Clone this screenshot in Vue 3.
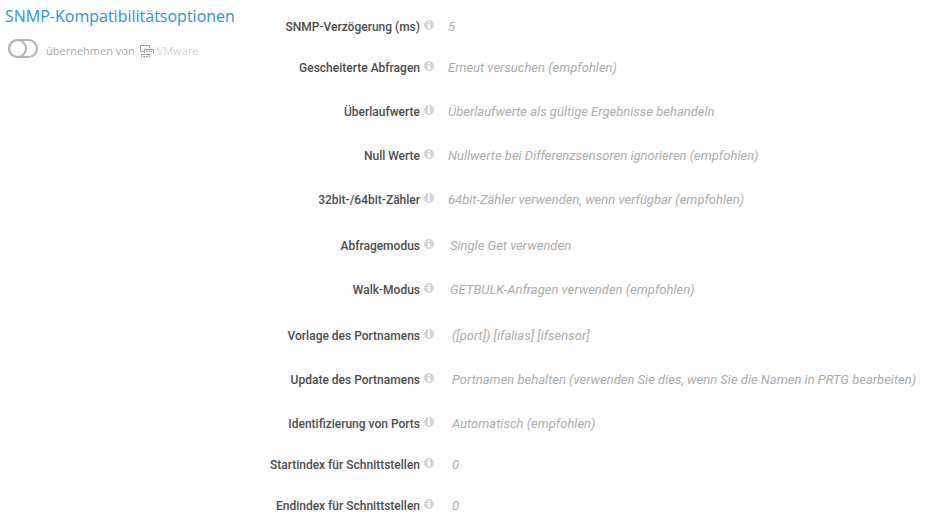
<template>
  <section class="settings">
    <header class="settings-head">
      <h2 class="settings-title">SNMP-Kompatibilitätsoptionen</h2>
      <div class="inherit">
        <input id="inherit" v-model="inherit" type="checkbox" class="switch" />
        <label for="inherit">übernehmen von</label>
        <a href="#" class="parent-link">
          <svg class="parent-icon" width="15" height="14" viewBox="0 0 15 14" aria-hidden="true">
            <path d="M9.5 4V1.5h-9v6H4M4.5 9V5.5h9V9M1.5 13.5v-3h8v3" />
            <path d="M6 7.5h2m1 0h1m1 0h1M3 12.5h2m1 0h2" />
          </svg>
          <span>VMware</span>
        </a>
      </div>
    </header>

    <div class="fields">
      <dl v-for="group in groups" :key="group.name" :class="['group', group.name]">
        <div
          v-for="field in group.fields"
          :key="field.label"
          :class="['field', { compact: field.compact }]"
        >
          <dt class="field-label">
            <span>{{ field.label }}</span>
            <button type="button" class="info" :aria-label="'Hilfe: ' + field.label">
              <svg width="10" height="10" viewBox="0 0 10 10" aria-hidden="true">
                <circle cx="5" cy="5" r="5" />
                <path d="M4 1.5h2v1.6H4zM3.4 4H6v3.2h.7v1.1H3.4V7.2H4V5h-.6z" />
              </svg>
            </button>
          </dt>
          <dd class="field-value">{{ field.value }}</dd>
        </div>
      </dl>
    </div>
  </section>
</template>

<script setup>
import { ref } from 'vue'

const inherit = ref(false)

const groups = [
  {
    name: 'values',
    fields: [
      { label: 'SNMP-Verzögerung (ms)', value: '5', compact: true },
      { label: 'Gescheiterte Abfragen', value: 'Erneut versuchen (empfohlen)' },
      { label: 'Überlaufwerte', value: 'Überlaufwerte als gültige Ergebnisse behandeln' },
      { label: 'Null Werte', value: 'Nullwerte bei Differenzsensoren ignorieren (empfohlen)' },
      { label: '32bit-/64bit-Zähler', value: '64bit-Zähler verwenden, wenn verfügbar (empfohlen)' }
    ]
  },
  {
    name: 'modes',
    fields: [
      { label: 'Abfragemodus', value: 'Single Get verwenden' },
      { label: 'Walk-Modus', value: 'GETBULK-Anfragen verwenden (empfohlen)' }
    ]
  },
  {
    name: 'ports',
    fields: [
      { label: 'Vorlage des Portnamens', value: '([port]) [ifalias] [ifsensor]' },
      {
        label: 'Update des Portnamens',
        value: 'Portnamen behalten (verwenden Sie dies, wenn Sie die Namen in PRTG bearbeiten)'
      },
      { label: 'Identifizierung von Ports', value: 'Automatisch (empfohlen)', compact: true },
      { label: 'Startindex für Schnittstellen', value: '0', compact: true },
      { label: 'Endindex für Schnittstellen', value: '0', compact: true }
    ]
  }
]
</script>

<style>
body {
  margin: 0;
  background: #fff;
}
</style>

<style scoped>
.settings {
  display: grid;
  grid-template-columns: 264px 1fr;
  font-family: Roboto, sans-serif;
}

.settings-head {
  padding: 4px 0 0 5px;
  font-family: 'Open Sans', sans-serif;
}

.settings-title {
  margin: 0;
  font-size: 16px;
  font-weight: 400;
  line-height: 24px;
  color: #2e96c8;
  white-space: nowrap;
}

.inherit {
  display: flex;
  align-items: center;
  margin-top: 8px;
  padding-left: 3px;
  font-size: 11px;
  line-height: 20px;
  color: #a8a8a8;
}

.inherit label,
.parent-link {
  padding-top: 5px;
}

.switch {
  appearance: none;
  box-sizing: border-box;
  width: 30px;
  height: 19px;
  margin: 0 8px 0 0;
  border: 2px solid #b4b4b4;
  border-radius: 10px;
  cursor: pointer;
}

.switch::before {
  content: '';
  display: block;
  box-sizing: border-box;
  width: 19px;
  height: 19px;
  margin: -2px;
  border: 2px solid #b4b4b4;
  border-radius: 50%;
}

.switch:checked::before {
  margin-left: 9px;
}

.parent-link {
  display: flex;
  align-items: center;
  gap: 2px;
  margin-left: 5px;
  color: #d4d4d4;
  text-decoration: none;
}

.parent-icon {
  fill: none;
  stroke: #a0a0a0;
}

.fields {
  padding-top: 17px;
}

.group {
  margin: 0 0 2px;
}

.field {
  display: grid;
  grid-template-columns: 170px 1fr;
  column-gap: 14px;
  min-height: 44px;
  line-height: 20px;
}

.field.compact {
  min-height: 41px;
}

.modes .field {
  column-gap: 16px;
}

.ports .field {
  column-gap: 18px;
}

.field-label {
  display: flex;
  align-items: flex-start;
  justify-content: flex-end;
  gap: 4px;
  font-size: 12px;
  font-weight: 500;
  color: #4c4c4c;
  white-space: nowrap;
}

.info {
  display: flex;
  margin: 3px 0 0;
  padding: 0;
  border: 0;
  background: none;
  cursor: pointer;
}

.info circle {
  fill: #d6d6d6;
}

.info path {
  fill: #fff;
}

.field-value {
  margin: 0;
  font-size: 13px;
  font-style: italic;
  color: #acacac;
}
</style>
